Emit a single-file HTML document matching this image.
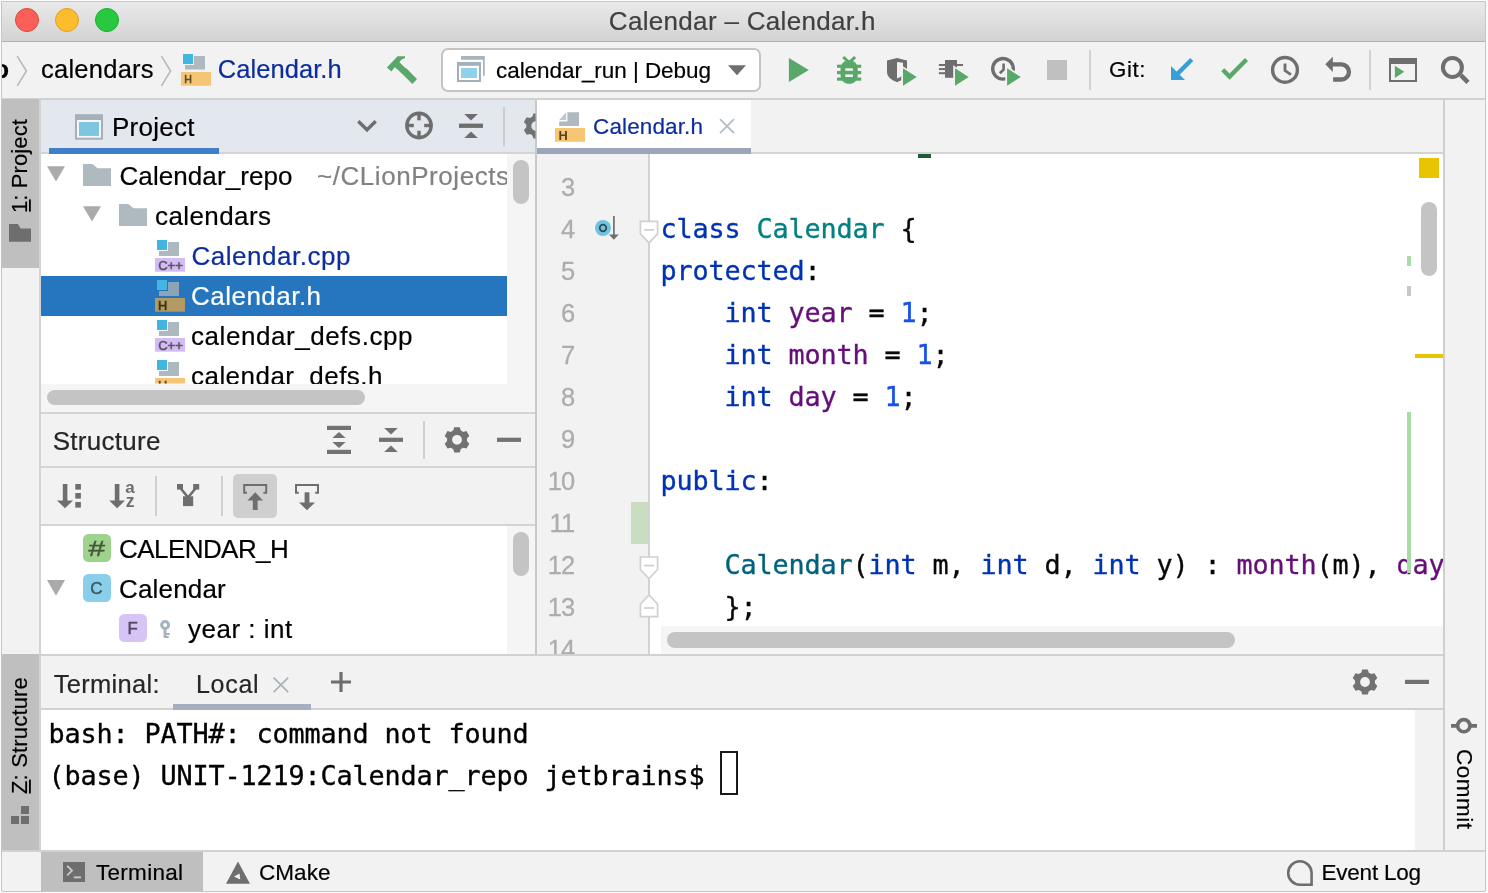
<!DOCTYPE html>
<html lang="en">
<head>
<meta charset="utf-8">
<title>Calendar – Calendar.h</title>
<style>
html,body{margin:0;padding:0;}
body{width:1488px;height:893px;overflow:hidden;background:#fbfbfb;position:relative;
  font-family:"Liberation Sans",sans-serif;color:#000;}
.b{position:absolute;box-sizing:border-box;}
.t{position:absolute;white-space:pre;font-family:"Liberation Sans",sans-serif;-webkit-text-stroke:0.2px currentColor;}
.ln{-webkit-text-stroke:0.3px currentColor;}
.m{position:absolute;white-space:pre;font-family:"DejaVu Sans Mono","Liberation Mono",monospace;-webkit-text-stroke:0.35px currentColor;}
svg{position:absolute;overflow:visible;}
#win{position:absolute;box-sizing:border-box;left:1px;top:1px;width:1485px;height:891px;background:#f2f2f2;overflow:hidden;border:1px solid #c6c6c6;border-radius:0 0 2px 2px;}
#pg{position:absolute;left:-2px;top:-2px;width:1488px;height:893px;will-change:transform;}
.clip{position:absolute;overflow:hidden;}
.kw{color:#0033b3;}
.cl{color:#00627a;}
.fd{color:#660e7a;}
.nm{color:#1750eb;}
</style>
</head>
<body>
<div id="win"><div id="pg">
<!-- ===== TITLE BAR ===== -->
<div class="b" style="left:2px;top:2px;width:1483px;height:40px;background:linear-gradient(#e9e9e9,#d3d3d3);border-bottom:1px solid #b2b2b2;"></div>
<div class="b" style="left:15px;top:8px;width:24px;height:24px;border-radius:50%;background:#fc5f57;border:1px solid #e0443e;"></div>
<div class="b" style="left:55px;top:8px;width:24px;height:24px;border-radius:50%;background:#fdbc2e;border:1px solid #dea123;"></div>
<div class="b" style="left:95px;top:8px;width:24px;height:24px;border-radius:50%;background:#28c840;border:1px solid #1eac2c;"></div>

<!-- ===== TOOLBAR ===== -->
<div class="b" style="left:2px;top:42px;width:1483px;height:56px;background:#f2f2f2;"></div>
<div class="b" style="left:2px;top:98px;width:1483px;height:2px;background:#d1d1d1;"></div>
<!-- run config box -->
<div class="b" style="left:441px;top:48px;width:320px;height:44px;background:#fff;border:2px solid #c4c4c4;border-radius:7px;"></div>
<!-- toolbar separators -->
<div class="b" style="left:1089px;top:50px;width:2px;height:40px;background:#d2d2d2;"></div>
<div class="b" style="left:1369px;top:50px;width:2px;height:40px;background:#d2d2d2;"></div>

<!-- ===== LEFT STRIP ===== -->
<div class="b" style="left:2px;top:99px;width:37px;height:169px;background:#bfbfbf;"></div>
<div class="b" style="left:2px;top:654px;width:37px;height:197px;background:#bfbfbf;"></div>
<div class="b" style="left:39px;top:99px;width:2px;height:753px;background:#d3d3d3;"></div>

<!-- ===== PROJECT PANEL ===== -->
<div class="b" style="left:41px;top:100px;width:495px;height:53px;background:#e3e7ee;"></div>
<div class="b" style="left:41px;top:152px;width:495px;height:2px;background:#d4d4d4;"></div>
<div class="b" style="left:49px;top:148px;width:170px;height:6px;background:#3f7fc9;"></div>
<div class="b" style="left:503px;top:107px;width:2px;height:39px;background:#cdcdcd;"></div>
<!-- tree -->
<div class="b" style="left:41px;top:154px;width:466px;height:230px;background:#fff;"></div>
<div class="b" style="left:507px;top:154px;width:29px;height:258px;background:#f5f5f5;"></div>
<div class="b" style="left:41px;top:276px;width:466px;height:40px;background:#2675bf;"></div>
<div class="b" style="left:513px;top:160px;width:16px;height:44px;border-radius:8px;background:#c4c4c4;"></div>
<!-- h scrollbar -->
<div class="b" style="left:41px;top:384px;width:466px;height:28px;background:#f5f5f5;"></div>
<div class="b" style="left:47px;top:389.7px;width:318px;height:15.8px;border-radius:8px;background:#c4c4c4;"></div>

<!-- ===== STRUCTURE PANEL ===== -->
<div class="b" style="left:41px;top:412px;width:495px;height:2px;background:#d4d4d4;"></div>
<div class="b" style="left:41px;top:466px;width:495px;height:2px;background:#d4d4d4;"></div>
<div class="b" style="left:41px;top:524px;width:495px;height:2px;background:#d4d4d4;"></div>
<div class="b" style="left:423px;top:421px;width:2px;height:38px;background:#d0d0d0;"></div>
<div class="b" style="left:155px;top:476px;width:2px;height:40px;background:#d0d0d0;"></div>
<div class="b" style="left:221px;top:476px;width:2px;height:40px;background:#d0d0d0;"></div>
<div class="b" style="left:233px;top:474px;width:44px;height:44px;border-radius:5px;background:#cfcfcf;"></div>
<div class="b" style="left:41px;top:526px;width:466px;height:128px;background:#fff;"></div>
<div class="b" style="left:507px;top:526px;width:29px;height:128px;background:#f5f5f5;"></div>
<div class="b" style="left:513px;top:532px;width:16px;height:44px;border-radius:8px;background:#c4c4c4;"></div>

<!-- ===== EDITOR ===== -->
<div class="b" style="left:535px;top:100px;width:2px;height:554px;background:#c9c9c9;"></div>
<!-- tab bar -->
<div class="b" style="left:537px;top:100px;width:214px;height:53px;background:#fff;"></div>
<div class="b" style="left:537px;top:152px;width:906px;height:2px;background:#d4d4d4;"></div>
<div class="b" style="left:537px;top:148px;width:214px;height:6px;background:#9ba6bb;"></div>
<!-- gutter + code -->
<div class="b" style="left:537px;top:154px;width:111px;height:500px;background:#f2f2f2;"></div>
<div class="b" style="left:648px;top:154px;width:2px;height:500px;background:#d2d2d2;"></div>
<div class="b" style="left:650px;top:154px;width:793px;height:500px;background:#fff;"></div>
<!-- gutter change marker -->
<div class="b" style="left:631px;top:502px;width:17px;height:42px;background:#c9dec1;"></div>
<!-- remnants of line 2 -->
<div class="b" style="left:918px;top:154px;width:13px;height:3.5px;background:#1f5c36;"></div>
<!-- h scrollbar -->
<div class="b" style="left:661px;top:626px;width:782px;height:28px;background:#f5f5f5;"></div>
<div class="b" style="left:667px;top:632px;width:568px;height:16px;border-radius:8px;background:#c4c4c4;"></div>

<!-- ===== RIGHT STRIP ===== -->
<div class="b" style="left:1443px;top:100px;width:2px;height:752px;background:#cfcfcf;"></div>

<!-- ===== TERMINAL ===== -->
<div class="b" style="left:39px;top:654px;width:1404px;height:2px;background:#d1d1d1;"></div>
<div class="b" style="left:41px;top:708px;width:1402px;height:2px;background:#d1d1d1;"></div>
<div class="b" style="left:173px;top:704px;width:138px;height:6px;background:#a6afc0;"></div>
<div class="b" style="left:41px;top:710px;width:1374px;height:140px;background:#fff;"></div>
<div class="b" style="left:720px;top:751px;width:18px;height:44px;border:2px solid #1a1a1a;"></div>

<!-- ===== STATUS BAR ===== -->
<div class="b" style="left:2px;top:850px;width:1483px;height:2px;background:#d1d1d1;"></div>
<div class="b" style="left:41px;top:852px;width:162px;height:39px;background:#bfbfbf;"></div>
<!-- ===== TOOLBAR ICONS ===== -->
<svg width="1488" height="893" viewBox="0 0 1488 893" style="left:0;top:0;">
 <!-- breadcrumb chevrons -->
 <polyline points="17.2,56.2 26.4,71 17.2,85.8" fill="none" stroke="#b3bbc1" stroke-width="1.6"/>
 <polyline points="161.4,56.2 170.6,71 161.4,85.8" fill="none" stroke="#b3bbc1" stroke-width="1.6"/>
 <!-- H file icon (breadcrumb) -->
 <g id="ic-h-bc">
  <rect x="185" y="56" width="20" height="13.5" fill="#adb8bf"/>
  <rect x="182.5" y="53.5" width="11" height="11" fill="#40b6e0" stroke="#f2f2f2" stroke-width="1"/>
  <rect x="181" y="72" width="30" height="13.7" fill="#f5c575"/>
  <text x="184.2" y="83.2" font-family="Liberation Sans, sans-serif" font-size="10.6" fill="#5c4a25" stroke="#5c4a25" stroke-width="0.6">H</text>
 </g>
 <!-- hammer -->
 <g fill="#59a869">
  <path d="M386.9,67.4 L397.6,56.3 L405,56.3 L405,58 C402.5,58.6 400.6,60.2 399.4,62.4 L402,65 L397.4,69.6 L394.9,67 L391.4,71.4 Z"/>
  <path d="M399.6,62.6 L406.6,69.3 L402.2,73.9 L395.3,67.2 Z"/>
  <path d="M406.3,68.2 L417,78.9 L412.4,84 L401.9,73.5 L401.9,71.2 Z"/>
 </g>
 <!-- run config icon -->
 <g id="ic-runcfg">
  <path d="M461,56 H484.8 V75.8 H483 V59.8 H461 Z" fill="#a9b5be"/>
  <rect x="457" y="62" width="24" height="20" fill="#a4b0b9"/>
  <rect x="459" y="65.8" width="20" height="14.2" fill="#fff"/>
  <rect x="461" y="68" width="16" height="10" fill="#8dd2ea"/>
 </g>
 <!-- dropdown triangle -->
 <path d="M728,65.2 H746 L737,75.2 Z" fill="#6e6e6e"/>
 <!-- run -->
 <path d="M788.9,57.9 L808.8,69.9 L788.9,82.1 Z" fill="#59a869"/>
 <!-- debug bug -->
 <g fill="#59a869" stroke="none">
  <path d="M840.5,70 C840.5,64 844,60.3 849.2,60.3 C854.4,60.3 857.8,64 857.8,70 V74.5 C857.8,80.5 854,83.8 849.2,83.8 C844.4,83.8 840.5,80.5 840.5,74.5 Z"/>
  <rect x="837" y="64.7" width="24.2" height="3.1"/>
  <rect x="837" y="71" width="24.2" height="3.2"/>
  <rect x="837" y="77.5" width="24.2" height="3.2"/>
  <path d="M842.2,57.9 L844.3,55.9 L850.2,61.5 L848.1,63.6 Z"/>
  <path d="M856.2,57.9 L854.1,55.9 L848.2,61.5 L850.3,63.6 Z"/>
 </g>
 <rect x="845.3" y="68.3" width="7.6" height="2.5" fill="#f2f2f2"/>
 <rect x="845.3" y="74.4" width="7.6" height="2.6" fill="#f2f2f2"/>
 <!-- coverage: shield + play -->
 <g>
  <path d="M887,60.6 L897,58 L907,60.6 V72 C907,77 902.5,80 897,82.2 C891.5,80 887,77 887,72 Z" fill="#6e6e6e"/>
  <path d="M897,62 L903,62.8 V73 C903,75.5 900.5,77.2 897,78.6 Z" fill="#f2f2f2"/>
  <path d="M901.2,65.2 L919,76.4 V77.6 L901.2,88.8 Z" fill="#f2f2f2"/>
  <path d="M903,68.2 L916.7,77 L903,85.8 Z" fill="#59a869"/>
 </g>
 <!-- profiler: chip + play -->
 <g>
  <rect x="945" y="60" width="12" height="17.8" fill="#6e6e6e"/>
  <rect x="938.9" y="64" width="6.5" height="2" fill="#6e6e6e"/>
  <rect x="938.9" y="68.1" width="6.5" height="2" fill="#6e6e6e"/>
  <rect x="938.9" y="72.2" width="6.5" height="2" fill="#6e6e6e"/>
  <rect x="956.5" y="64" width="6.5" height="2" fill="#6e6e6e"/>
  <path d="M953.2,65.2 L971,76.4 V77.6 L953.2,88.8 Z" fill="#f2f2f2"/>
  <path d="M955,68.2 L968.7,77 L955,85.8 Z" fill="#59a869"/>
 </g>
 <!-- clock + play -->
 <g>
  <circle cx="1003" cy="68.8" r="10.3" fill="none" stroke="#6e6e6e" stroke-width="3.4"/>
  <polyline points="1003.6,63.4 1003.6,69.6 999.8,73.3" fill="none" stroke="#6e6e6e" stroke-width="2.6"/>
  <path d="M1005.3,65.2 L1023.1,76.4 V77.6 L1005.3,88.8 Z" fill="#f2f2f2"/>
  <path d="M1007.1,68.2 L1020.8,77 L1007.1,85.8 Z" fill="#59a869"/>
 </g>
 <!-- stop -->
 <rect x="1047" y="60" width="20" height="20" fill="#c0c0c0"/>
 <!-- git update (blue arrow) -->
 <g fill="#389fd6">
  <path d="M1190.2,58 L1193.3,61.1 L1178.5,75.9 L1175.4,72.8 Z"/>
  <path d="M1171,66 L1185,80 H1171 Z"/>
 </g>
 <!-- git commit (check) -->
 <polyline points="1222.7,69.7 1229.6,76.6 1246.5,59.6" fill="none" stroke="#59a869" stroke-width="4.3"/>
 <!-- history clock -->
 <circle cx="1285" cy="69.9" r="12.4" fill="none" stroke="#6e6e6e" stroke-width="3.4"/>
 <polyline points="1285,63.6 1285,70.6 1291,74.7" fill="none" stroke="#6e6e6e" stroke-width="2.8"/>
 <!-- rollback -->
 <path d="M1325.3,64.3 L1332.8,56.8 V71.9 Z" fill="#6e6e6e"/>
 <path d="M1332,64.4 H1341.4 A7.55,7.55 0 0 1 1341.4,79.5 H1333.1" fill="none" stroke="#6e6e6e" stroke-width="4.3"/>
 <!-- run anything window -->
 <path d="M1389,58 H1417 V82 H1389 Z M1391,64 V80 H1415 V64 Z" fill="#6e6e6e" fill-rule="evenodd"/>
 <path d="M1394.9,65.8 L1404.2,71.8 L1394.9,78 Z" fill="#59a869"/>
 <!-- search -->
 <circle cx="1452.4" cy="67.4" r="9.5" fill="none" stroke="#6e6e6e" stroke-width="4"/>
 <path d="M1459.2,76.8 L1462.4,73.6 L1469.6,80.8 L1466.4,84 Z" fill="#6e6e6e"/>
</svg>
<!-- ===== LEFT PANEL ICONS ===== -->
<svg width="1488" height="893" viewBox="0 0 1488 893" style="left:0;top:0;">
 <!-- left strip: project folder, structure -->
 <path d="M9,224 H18 L20.5,228.4 H31 V241.8 H9 Z" fill="#6e6e6e"/>
 <g fill="#6e6e6e"><rect x="21" y="806" width="8" height="8"/><rect x="11" y="816" width="8" height="8"/><rect x="21" y="816" width="8" height="8"/></g>
 <rect x="29" y="199.4" width="1.8" height="12.2" fill="#000"/><rect x="29" y="779.6" width="1.8" height="13.9" fill="#000"/>
 <!-- project view icon -->
 <rect x="75" y="114.2" width="28" height="25.5" fill="#a5b0b9"/><rect x="77" y="120" width="24" height="17.7" fill="#f4f6f8"/><rect x="79" y="122" width="20" height="13.9" fill="#7ec5e0"/>
 <!-- project header tools -->
 <polyline points="358.3,121.2 367,129.8 375.7,121.2" fill="none" stroke="#6e6e6e" stroke-width="3.4"/>
 <circle cx="419" cy="125.5" r="12.2" fill="none" stroke="#6e6e6e" stroke-width="3.4"/>
 <g stroke="#6e6e6e" stroke-width="3.4"><line x1="419" y1="113" x2="419" y2="120.3"/><line x1="419" y1="130.7" x2="419" y2="138"/><line x1="406.5" y1="125.5" x2="413.8" y2="125.5"/><line x1="424.2" y1="125.5" x2="431.5" y2="125.5"/></g>
 <g fill="#6e6e6e"><rect x="459" y="123.6" width="24" height="4.3"/><path d="M464.2,114 H477.8 L471,120.6 Z"/><path d="M464.2,138 H477.8 L471,131.4 Z"/></g>
 <clipPath id="cpg"><rect x="500" y="100" width="35.5" height="52"/></clipPath>
 <path clip-path="url(#cpg)" fill-rule="evenodd" fill="#727272" d="M540.00,116.80 L539.00,113.40 L533.40,113.40 L532.40,116.80 A9.2,9.2 0 0 0 530.13,118.11 L526.69,117.28 L523.89,122.12 L526.33,124.69 A9.2,9.2 0 0 0 526.33,127.31 L523.89,129.88 L526.69,134.72 L530.13,133.89 A9.2,9.2 0 0 0 532.40,135.20 L533.40,138.60 L539.00,138.60 L540.00,135.20 A9.2,9.2 0 0 0 542.27,133.89 L545.71,134.72 L548.51,129.88 L546.07,127.31 A9.2,9.2 0 0 0 546.07,124.69 L548.51,122.12 L545.71,117.28 L542.27,118.11 A9.2,9.2 0 0 0 540.00,116.80Z M531.30,126.00 a4.9,4.9 0 1 0 9.8,0 a4.9,4.9 0 1 0 -9.8,0Z"/>
 <!-- project tree -->
 <path d="M47,166.3 H65 L56.0,181.5 Z" fill="#ababab"/>
 <path d="M83,164 H91.2 C93,164 94,165 95,166.2 L97.6,168.2 H111 V186 H83 Z" fill="#aeb9c0"/>
 <path d="M83,206.3 H101 L92.0,221.5 Z" fill="#ababab"/>
 <path d="M119,204 H127.2 C129,204 130,205 131,206.2 L133.6,208.2 H147 V226 H119 Z" fill="#aeb9c0"/>
 <g>
  <rect x="159" y="242" width="20" height="14" fill="#adb8bf"/>
  <rect x="156.5" y="239.5" width="11" height="11" fill="#40b6e0" stroke="#fff" stroke-width="1"/>
  <rect x="155" y="258" width="30" height="13.7" fill="#d3bbf4"/>
  <text x="158.2" y="269.8" font-family="Liberation Sans, sans-serif" font-size="13.4" textLength="24.6" lengthAdjust="spacingAndGlyphs" fill="#5d5468" stroke="#5d5468" stroke-width="0.6">C++</text>
 </g>
 <g>
  <rect x="159" y="282" width="20" height="14" fill="#8fa3b8"/>
  <rect x="156.5" y="279.5" width="11" height="11" fill="#40b6e0" stroke="#2675bf" stroke-width="1"/>
  <rect x="155" y="298" width="30" height="13.7" fill="#b39a62"/>
  <text x="158.0" y="309.7" font-family="Liberation Sans, sans-serif" font-size="12.8" fill="#3b3318" stroke="#3b3318" stroke-width="0.6">H</text>
 </g>
 <g>
  <rect x="159" y="322" width="20" height="14" fill="#adb8bf"/>
  <rect x="156.5" y="319.5" width="11" height="11" fill="#40b6e0" stroke="#fff" stroke-width="1"/>
  <rect x="155" y="338" width="30" height="13.7" fill="#d3bbf4"/>
  <text x="158.2" y="349.8" font-family="Liberation Sans, sans-serif" font-size="13.4" textLength="24.6" lengthAdjust="spacingAndGlyphs" fill="#5d5468" stroke="#5d5468" stroke-width="0.6">C++</text>
 </g>
 <clipPath id="cpt"><rect x="41" y="154" width="466" height="229.6"/></clipPath>
 <g clip-path="url(#cpt)"><g>
  <rect x="159" y="362" width="20" height="14" fill="#adb8bf"/>
  <rect x="156.5" y="359.5" width="11" height="11" fill="#40b6e0" stroke="#fff" stroke-width="1"/>
  <rect x="155" y="378" width="30" height="13.7" fill="#f5c575"/>
  <text x="158.0" y="389.7" font-family="Liberation Sans, sans-serif" font-size="12.8" fill="#5c4a25" stroke="#5c4a25" stroke-width="0.6">H</text>
 </g></g>
 <!-- structure header tools -->
 <g fill="#727272"><rect x="327" y="425.8" width="24" height="4.2"/><rect x="327" y="449.8" width="24" height="4.2"/><path d="M332.3,438 H345.7 L339,432 Z"/><path d="M332.3,442 H345.7 L339,448 Z"/></g>
 <g fill="#727272"><rect x="379" y="437.7" width="24" height="4.2"/><path d="M384.2,428 H397.8 L391,434.6 Z"/><path d="M384.2,452 H397.8 L391,445.4 Z"/></g>
 <path fill-rule="evenodd" fill="#727272" d="M460.80,430.60 L459.80,427.20 L454.20,427.20 L453.20,430.60 A9.2,9.2 0 0 0 450.93,431.91 L447.49,431.08 L444.69,435.92 L447.13,438.49 A9.2,9.2 0 0 0 447.13,441.11 L444.69,443.68 L447.49,448.52 L450.93,447.69 A9.2,9.2 0 0 0 453.20,449.00 L454.20,452.40 L459.80,452.40 L460.80,449.00 A9.2,9.2 0 0 0 463.07,447.69 L466.51,448.52 L469.31,443.68 L466.87,441.11 A9.2,9.2 0 0 0 466.87,438.49 L469.31,435.92 L466.51,431.08 L463.07,431.91 A9.2,9.2 0 0 0 460.80,430.60Z M452.10,439.80 a4.9,4.9 0 1 0 9.8,0 a4.9,4.9 0 1 0 -9.8,0Z"/>
 <rect x="497" y="437.7" width="24" height="4.2" fill="#727272"/>
 <!-- structure toolbar -->
 <g fill="#6e6e6e"><rect x="62.8" y="484" width="4.6" height="17"/><path d="M57,500.4 H73 L65,508.2 Z"/><rect x="75.3" y="484" width="5.6" height="5.6"/><rect x="75.3" y="493" width="5.6" height="5.6"/><rect x="75.3" y="502" width="5.6" height="5.6"/></g>
 <g fill="#6e6e6e"><rect x="114.8" y="484" width="4.6" height="17"/><path d="M109.2,500.4 H125 L117.1,508.2 Z"/>
  <text x="125.3" y="493.4" font-family="Liberation Sans, sans-serif" font-weight="bold" font-size="17">a</text><text x="125.8" y="507.4" font-family="Liberation Sans, sans-serif" font-weight="bold" font-size="17.6">z</text></g>
 <g fill="#6e6e6e"><rect x="177" y="484" width="6" height="5.6"/><rect x="193.2" y="484" width="6" height="5.6"/><rect x="183" y="496.3" width="10.2" height="9.8"/></g>
 <g stroke="#6e6e6e" stroke-width="2.6" fill="none"><polyline points="180,487.5 188.1,497.5 196.2,487.5"/></g>
 <g fill="#6e6e6e"><path d="M243.2,484 H267.2 V493.8 H263.4 V491.8 H265.2 V486 H245.2 V491.8 H247 V493.8 H243.2 Z"/><path d="M255.2,492.2 L263,500.4 H247.4 Z"/><rect x="252.8" y="500" width="4.8" height="10"/></g>
 <g fill="#6e6e6e"><path d="M295,484 H319 V493.8 H315.2 V491.8 H317 V486 H297 V491.8 H298.8 V493.8 H295 Z"/><rect x="304.6" y="492.3" width="4.8" height="11"/><path d="M299,502.6 H315 L307,510.2 Z"/></g>
 <!-- structure tree -->
 <rect x="83" y="534" width="28" height="28" rx="5.5" fill="#9fd28d"/>
 <text x="88.6" y="555.6" font-family="Liberation Sans, sans-serif" font-size="21.5" textLength="16.6" lengthAdjust="spacingAndGlyphs" fill="#46593a" stroke="#46593a" stroke-width="0.4">#</text>
 <path d="M47,580 H65 L56,595.8 Z" fill="#ababab"/>
 <rect x="83" y="574" width="28" height="28" rx="5.5" fill="#89cfe9"/>
 <text x="90.3" y="594" font-family="Liberation Sans, sans-serif" font-size="17" fill="#3e5a66" stroke="#3e5a66" stroke-width="0.5">C</text>
 <rect x="119" y="614" width="28" height="28" rx="5.5" fill="#d6c4f7"/>
 <text x="127.6" y="634" font-family="Liberation Sans, sans-serif" font-size="16.8" fill="#554a63" stroke="#554a63" stroke-width="0.5">F</text>
 <g fill="none" stroke="#a4b3bd"><circle cx="165.1" cy="625" r="3.45" stroke-width="3"/><path d="M165,628.6 V637.9" stroke-width="2.9"/><path d="M165,634 H169.8 M165,636.9 H168.8" stroke-width="2"/></g>
</svg>
<!-- ===== EDITOR / BOTTOM ICONS ===== -->
<svg width="1488" height="893" viewBox="0 0 1488 893" style="left:0;top:0;">
 <!-- editor tab icon -->
 <path d="M567.4,112.3 H579 V126 H559.2 V121.4 H567.4 Z" fill="#aeb9c0"/>
 <path d="M559.2,120 L566.2,112.3 V120 Z" fill="#bfc8ce"/>
 <rect x="555" y="128" width="30" height="13.8" fill="#f6c674"/>
 <text x="558.4" y="139.7" font-family="Liberation Sans, sans-serif" font-weight="bold" font-size="12.8" fill="#57421e">H</text>
 <path d="M720,119.2 L734,133.2 M734,119.2 L720,133.2" stroke="#b4bcc2" stroke-width="1.7" fill="none"/>
 <!-- gutter icons -->
 <circle cx="603" cy="228" r="8" fill="#6fc4e0"/>
 <circle cx="603" cy="228" r="3.3" fill="none" stroke="#2f4b59" stroke-width="1.7"/>
 <path d="M613.9,216 V236" stroke="#6e6e6e" stroke-width="1.7" fill="none"/>
 <path d="M609,234.4 H618.8 L613.9,239.8 Z" fill="#6e6e6e"/>
 <path d="M640.4,221.3 H657.6 V233.8 L649,242.9 L640.4,233.8 Z" fill="#fff" stroke="#d0d0d0" stroke-width="1.7"/><path d="M644,229.9 H654" stroke="#d0d0d0" stroke-width="1.7"/>
 <path d="M640.4,557 H657.6 V569.5 L649,578.6 L640.4,569.5 Z" fill="#fff" stroke="#d0d0d0" stroke-width="1.7"/><path d="M644,565.6 H654" stroke="#d0d0d0" stroke-width="1.7"/>
 <path d="M640.4,616.6 H657.6 V604.1 L649,595.0 L640.4,604.1 Z" fill="#fff" stroke="#d0d0d0" stroke-width="1.7"/><path d="M644,608.0 H654" stroke="#d0d0d0" stroke-width="1.7"/>
 <!-- terminal header -->
 <path d="M273.6,677.6 L288.2,692.2 M288.2,677.6 L273.6,692.2" stroke="#aab3ba" stroke-width="1.7" fill="none"/>
 <path d="M341,672 V692 M331,682 H351" stroke="#6e6e6e" stroke-width="3.2" fill="none"/>
 <path fill-rule="evenodd" fill="#727272" d="M1368.80,672.80 L1367.80,669.40 L1362.20,669.40 L1361.20,672.80 A9.2,9.2 0 0 0 1358.93,674.11 L1355.49,673.28 L1352.69,678.12 L1355.13,680.69 A9.2,9.2 0 0 0 1355.13,683.31 L1352.69,685.88 L1355.49,690.72 L1358.93,689.89 A9.2,9.2 0 0 0 1361.20,691.20 L1362.20,694.60 L1367.80,694.60 L1368.80,691.20 A9.2,9.2 0 0 0 1371.07,689.89 L1374.51,690.72 L1377.31,685.88 L1374.87,683.31 A9.2,9.2 0 0 0 1374.87,680.69 L1377.31,678.12 L1374.51,673.28 L1371.07,674.11 A9.2,9.2 0 0 0 1368.80,672.80Z M1360.10,682.00 a4.9,4.9 0 1 0 9.8,0 a4.9,4.9 0 1 0 -9.8,0Z"/>
 <rect x="1405" y="679.8" width="24" height="4.2" fill="#727272"/>
 <!-- right strip -->
 <circle cx="1463.8" cy="725.7" r="6.1" fill="none" stroke="#6e6e6e" stroke-width="3.6"/>
 <path d="M1451,725.8 H1457.6 M1470,725.8 H1477" stroke="#6e6e6e" stroke-width="3.8"/>
 <!-- status bar icons -->
 <rect x="63" y="862" width="22" height="20" fill="#6e6e6e"/>
 <polyline points="67.2,865.8 72,870.6 67.2,875.4" fill="none" stroke="#c9c9c9" stroke-width="1.9"/>
 <rect x="73.8" y="876.4" width="7.2" height="1.9" fill="#c9c9c9"/>
 <path d="M238,861.4 L250,883.8 H226 Z" fill="#6e6e6e"/>
 <path d="M234,876.6 L239.6,873.6 L240.2,879.6 Z" fill="#f2f2f2"/>
 <path d="M1311.6,873 A11.7,11.7 0 1 0 1299.9,884.7 H1311.6 Z" fill="none" stroke="#6e6e6e" stroke-width="2.6"/>
</svg>
<!-- ===== CODE ===== -->
<div class="clip" id="codeclip" style="left:650px;top:154px;width:793px;height:472px;">
<div class="m" style="left:10.600000000000023px;top:53.52px;font-size:26.8px;line-height:42px;letter-spacing:-0.135px;color:#080808;"><span class="kw">class</span> <span style="color:#008080">Calendar</span> {</div>
<div class="m" style="left:10.600000000000023px;top:95.52px;font-size:26.8px;line-height:42px;letter-spacing:-0.135px;color:#080808;"><span class="kw">protected</span>:</div>
<div class="m" style="left:10.600000000000023px;top:137.52px;font-size:26.8px;line-height:42px;letter-spacing:-0.135px;color:#080808;">    <span class="kw">int</span> <span class="fd">year</span> = <span class="nm">1</span>;</div>
<div class="m" style="left:10.600000000000023px;top:179.52px;font-size:26.8px;line-height:42px;letter-spacing:-0.135px;color:#080808;">    <span class="kw">int</span> <span class="fd">month</span> = <span class="nm">1</span>;</div>
<div class="m" style="left:10.600000000000023px;top:221.52px;font-size:26.8px;line-height:42px;letter-spacing:-0.135px;color:#080808;">    <span class="kw">int</span> <span class="fd">day</span> = <span class="nm">1</span>;</div>
<div class="m" style="left:10.600000000000023px;top:305.52px;font-size:26.8px;line-height:42px;letter-spacing:-0.135px;color:#080808;"><span class="kw">public</span>:</div>
<div class="m" style="left:10.600000000000023px;top:389.52px;font-size:26.8px;line-height:42px;letter-spacing:-0.135px;color:#080808;">    <span class="cl">Calendar</span>(<span class="kw">int</span> m, <span class="kw">int</span> d, <span class="kw">int</span> y) : <span class="fd">month</span>(m), <span class="fd">day</span>(d), <span class="fd">year</span>(y) {</div>
<div class="m" style="left:10.600000000000023px;top:431.52px;font-size:26.8px;line-height:42px;letter-spacing:-0.135px;color:#080808;">    };</div>
</div>
<div class="clip" id="lnclip" style="left:537px;top:154px;width:111px;height:500px;">
<div class="t ln" style="right:73.8px;top:12.16px;font-size:25.5px;line-height:42px;letter-spacing:-0.9px;color:#adadad;">3</div>
<div class="t ln" style="right:73.8px;top:54.16px;font-size:25.5px;line-height:42px;letter-spacing:-0.9px;color:#adadad;">4</div>
<div class="t ln" style="right:73.8px;top:96.16px;font-size:25.5px;line-height:42px;letter-spacing:-0.9px;color:#adadad;">5</div>
<div class="t ln" style="right:73.8px;top:138.16px;font-size:25.5px;line-height:42px;letter-spacing:-0.9px;color:#adadad;">6</div>
<div class="t ln" style="right:73.8px;top:180.16px;font-size:25.5px;line-height:42px;letter-spacing:-0.9px;color:#adadad;">7</div>
<div class="t ln" style="right:73.8px;top:222.16px;font-size:25.5px;line-height:42px;letter-spacing:-0.9px;color:#adadad;">8</div>
<div class="t ln" style="right:73.8px;top:264.16px;font-size:25.5px;line-height:42px;letter-spacing:-0.9px;color:#adadad;">9</div>
<div class="t ln" style="right:73.8px;top:306.16px;font-size:25.5px;line-height:42px;letter-spacing:-0.9px;color:#adadad;">10</div>
<div class="t ln" style="right:73.8px;top:348.16px;font-size:25.5px;line-height:42px;letter-spacing:-0.9px;color:#adadad;">11</div>
<div class="t ln" style="right:73.8px;top:390.16px;font-size:25.5px;line-height:42px;letter-spacing:-0.9px;color:#adadad;">12</div>
<div class="t ln" style="right:73.8px;top:432.16px;font-size:25.5px;line-height:42px;letter-spacing:-0.9px;color:#adadad;">13</div>
<div class="t ln" style="right:73.8px;top:474.16px;font-size:25.5px;line-height:42px;letter-spacing:-0.9px;color:#adadad;">14</div>
</div>
<!-- ===== TERMINAL TEXT ===== -->
<div class="m" style="left:48.5px;top:713.22px;font-size:26.8px;line-height:42px;letter-spacing:-0.135px;color:#000;">bash: PATH#: command not found</div>
<div class="m" style="left:48.5px;top:755.12px;font-size:26.8px;line-height:42px;letter-spacing:-0.135px;color:#000;">(base) UNIT-1219:Calendar_repo jetbrains$ </div>
<!-- right stripe marks -->
<div class="b" style="left:1419px;top:158px;width:20px;height:20px;background:#e9c400;"></div>
<div class="b" style="left:1421px;top:202px;width:16px;height:74px;border-radius:8px;background:#c4c4c4;"></div>
<div class="b" style="left:1407px;top:256px;width:4px;height:10px;background:#a8dba8;"></div>
<div class="b" style="left:1407px;top:286px;width:4px;height:10px;background:#c8c8c8;"></div>
<div class="b" style="left:1415px;top:354px;width:28px;height:4px;background:#e9c400;"></div>
<div class="b" style="left:1407px;top:412px;width:4px;height:161px;background:#a8dba8;"></div>
<!-- ===== UI TEXT ===== -->
<div class="t" id="title" style="left:608.80px;top:5.80px;font-size:26px;line-height:30.00px;letter-spacing:0.319px;color:#404040;">Calendar – Calendar.h</div>
<div class="t" id="bc1" style="left:41.00px;top:54.60px;font-size:25.5px;line-height:28.00px;letter-spacing:0.248px;color:#000;">calendars</div>
<div class="t" id="bc2" style="left:217.70px;top:54.60px;font-size:25.5px;line-height:28.00px;letter-spacing:0.071px;color:#0c2d9e;">Calendar.h</div>
<div class="t" id="runcfg" style="left:496.00px;top:57.60px;font-size:22.5px;line-height:25.00px;letter-spacing:-0.051px;color:#000;">calendar_run | Debug</div>
<div class="t" id="git" style="left:1109.00px;top:57.30px;font-size:22.3px;line-height:25.00px;letter-spacing:0.603px;color:#000;">Git:</div>
<div class="t" id="bc0" style="left:-6.40px;top:54.60px;font-size:25.5px;line-height:28.00px;letter-spacing:0.000px;color:#000;font-weight:bold;">o</div>
<div class="t" id="proj" style="left:111.90px;top:111.80px;font-size:26px;line-height:30.00px;letter-spacing:0.267px;color:#000;">Project</div>
<div class="t" id="tr1" style="left:119.50px;top:161.00px;font-size:26px;line-height:30.00px;letter-spacing:0.079px;color:#000;">Calendar_repo</div>
<div class="clip" style="left:41px;top:154px;width:466px;height:230px;"><div class="t" id="tr1b" style="left:276.00px;top:7.40px;font-size:26px;line-height:30.00px;letter-spacing:0.553px;color:#828282;">~/CLionProjects</div></div>
<div class="t" id="tr2" style="left:155.00px;top:201.00px;font-size:26px;line-height:30.00px;letter-spacing:0.408px;color:#000;">calendars</div>
<div class="t" id="tr3" style="left:191.50px;top:241.00px;font-size:26px;line-height:30.00px;letter-spacing:0.522px;color:#0c2d9e;">Calendar.cpp</div>
<div class="t" id="tr4" style="left:191.00px;top:281.00px;font-size:26px;line-height:30.00px;letter-spacing:0.478px;color:#fff;">Calendar.h</div>
<div class="t" id="tr5" style="left:191.00px;top:321.00px;font-size:26px;line-height:30.00px;letter-spacing:0.561px;color:#000;">calendar_defs.cpp</div>
<div class="clip" style="left:41px;top:154px;width:466px;height:229.5px;"><div class="t" id="tr6" style="left:150.00px;top:207.00px;font-size:26px;line-height:30.00px;letter-spacing:0.460px;color:#000;">calendar_defs.h</div></div>
<div class="t" id="struct" style="left:52.70px;top:426.00px;font-size:26px;line-height:30.00px;letter-spacing:0.284px;color:#262626;">Structure</div>
<div class="t" id="st1" style="left:119.00px;top:533.50px;font-size:26px;line-height:30.00px;letter-spacing:-0.561px;color:#000;">CALENDAR_H</div>
<div class="t" id="st2" style="left:119.00px;top:573.50px;font-size:26px;line-height:30.00px;letter-spacing:0.164px;color:#000;">Calendar</div>
<div class="t" id="st3" style="left:188.00px;top:613.50px;font-size:26px;line-height:30.00px;letter-spacing:0.502px;color:#000;">year : int</div>
<div class="t" id="tab" style="left:593.00px;top:113.70px;font-size:22.5px;line-height:25.00px;letter-spacing:0.131px;color:#0c2d9e;">Calendar.h</div>
<div class="t" id="termh" style="left:53.70px;top:669.50px;font-size:25.5px;line-height:28.00px;letter-spacing:0.305px;color:#262626;">Terminal:</div>
<div class="t" id="local" style="left:196.00px;top:669.50px;font-size:25px;line-height:28.00px;letter-spacing:0.697px;color:#262626;">Local</div>
<div class="t" id="sb1" style="left:96.00px;top:859.50px;font-size:22.5px;line-height:25.00px;letter-spacing:0.282px;color:#000;">Terminal</div>
<div class="t" id="sb2" style="left:259.00px;top:859.50px;font-size:22.5px;line-height:25.00px;letter-spacing:0.061px;color:#000;">CMake</div>
<div class="t" id="sb3" style="left:1321.50px;top:860.00px;font-size:22.5px;line-height:25.00px;letter-spacing:-0.227px;color:#000;">Event Log</div>
<div class="t" id="v1" style="left:6.80px;top:212.60px;font-size:22px;line-height:25.00px;letter-spacing:0.109px;color:#000;transform-origin:0 0;transform:rotate(-90deg);">1: Project</div>
<div class="t" id="v2" style="left:6.80px;top:793.60px;font-size:22px;line-height:25.00px;letter-spacing:0.174px;color:#000;transform-origin:0 0;transform:rotate(-90deg);">Z: Structure</div>
<div class="t" id="v3" style="left:1477.00px;top:748.50px;font-size:22.5px;line-height:25.00px;letter-spacing:0.491px;color:#000;transform-origin:0 0;transform:rotate(90deg);">Commit</div>
</div></div>
</body>
</html>
